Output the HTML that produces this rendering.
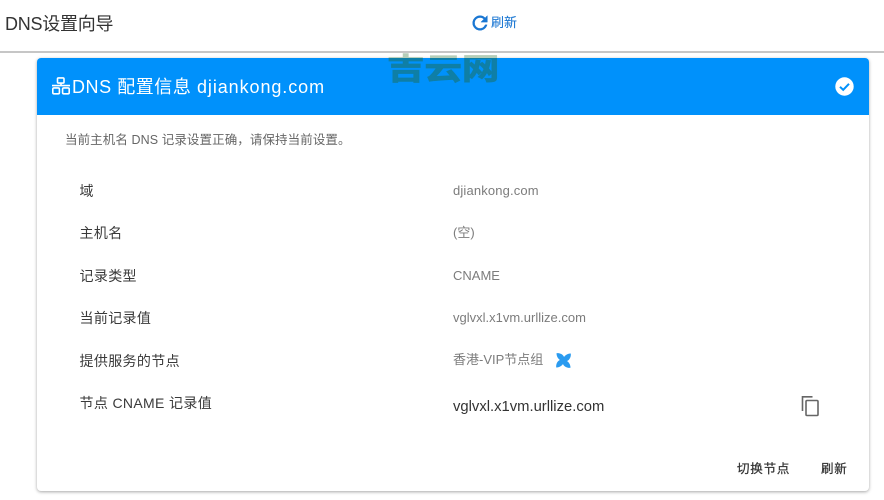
<!DOCTYPE html>
<html lang="zh">
<head>
<meta charset="utf-8">
<style>
html,body{margin:0;padding:0;background:#fff;}
body{width:884px;height:500px;overflow:hidden;position:relative;font-family:"Liberation Sans","Noto Sans CJK SC",sans-serif;}
.t{position:absolute;white-space:nowrap;line-height:20px;}
.k{left:79.500px;font-size:14px;color:#3a3a3a;letter-spacing:.35px;}
.v{left:453px;font-size:13px;color:#7c7c7c;}
.wmw{position:absolute;left:0;width:884px;overflow:hidden;}
.wm{position:absolute;left:386.500px;width:105px;height:44px;line-height:44px;font-size:35px;font-weight:bold;white-space:nowrap;transform:scale(1.07,.86);transform-origin:0 50%;-webkit-text-stroke:1px currentColor;}
.btn{font-size:12.500px;color:#333;letter-spacing:.8px;-webkit-text-stroke:.25px #333;}
</style>
</head>
<body>
<div class="t" style="left:5px;top:13.500px;font-size:18px;color:#333;letter-spacing:-.25px;">DNS设置向导</div>
<svg style="position:absolute;left:469px;top:12px" width="22" height="22" viewBox="0 0 24 24"><path fill="#1976d2" stroke="#1976d2" stroke-width=".5" d="M17.650 6.350A7.960 7.960 0 0 0 12 4a8 8 0 1 0 7.730 10h-2.080A6 6 0 1 1 12 6c1.660 0 3.140.69 4.220 1.780L13 11h7V4z"/></svg>
<div class="t" style="left:491px;top:13px;font-size:13px;color:#1976d2;-webkit-text-stroke:.1px #1976d2;">刷新</div>
<div style="position:absolute;left:0;top:51px;width:884px;height:2px;background:#c6c6c6;"></div>

<div style="position:absolute;left:37px;top:58px;width:832px;height:433px;background:#fff;border-radius:4px;box-shadow:0 1px 3px rgba(0,0,0,.35);overflow:hidden;">
  <div style="height:57px;background:#0091fb;"></div>
</div>

<svg style="position:absolute;left:51px;top:77px" width="20" height="20" viewBox="0 0 20 20" fill="none" stroke="#fff" stroke-width="1.600"><rect x="6.500" y=".9" width="6.500" height="5.200" rx="1"/><rect x="1.800" y="10.900" width="6.600" height="5.900" rx="1.200"/><rect x="11.600" y="10.900" width="6.600" height="5.900" rx="1.200"/><path d="M1 8.600H19M10 6v2.600"/></svg>
<div class="t" style="left:72px;top:77px;font-size:18px;color:#fff;letter-spacing:.55px;">DNS 配置信息 <span style="letter-spacing:.92px">djiankong.com</span></div>
<svg style="position:absolute;left:835px;top:77px" width="19" height="19" viewBox="0 0 19 19"><circle cx="9.500" cy="9.500" r="9.200" fill="#fff"/><path d="M5 9.800l3.200 3 5.800-6" fill="none" stroke="#0091fb" stroke-width="2"/></svg>

<div class="wmw" style="top:53px;height:5px;"><div class="wm" style="top:-5px;color:#b5cdb8;">吉云网</div></div>
<div class="wmw" style="top:58px;height:30px;"><div class="wm" style="top:-10px;color:#0f7fa6;">吉云网</div></div>

<div class="t" style="left:65px;top:129.500px;font-size:12.500px;color:#666;letter-spacing:.09px;">当前主机名 DNS 记录设置正确，请保持当前设置。</div>

<div class="t k" style="top:181px;">域</div>
<div class="t k" style="top:223px;">主机名</div>
<div class="t k" style="top:266px;">记录类型</div>
<div class="t k" style="top:308px;">当前记录值</div>
<div class="t k" style="top:351px;">提供服务的节点</div>
<div class="t k" style="top:393px;">节点 CNAME 记录值</div>

<div class="t v" style="top:181px;letter-spacing:.15px;">djiankong.com</div>
<div class="t v" style="top:223px;">(空)</div>
<div class="t v" style="top:266px;">CNAME</div>
<div class="t v" style="top:308px;">vglvxl.x1vm.urllize.com</div>
<div class="t v" style="top:350px;">香港-VIP节点组</div>
<svg style="position:absolute;left:555px;top:352px" width="17" height="17" viewBox="0 0 17 17" fill="#2a9bf0"><path d="M9 9.500C5 9 1.500 6 1.500 1.200C6 .6 11 4 9 9.500z"/><path d="M9 9.500C5 9 1.500 6 1.500 1.200C6 .6 11 4 9 9.500z" transform="rotate(90 8.500 8.500)"/><path d="M9 9.500C5 9 1.500 6 1.500 1.200C6 .6 11 4 9 9.500z" transform="rotate(180 8.500 8.500)"/><path d="M9 9.500C5 9 1.500 6 1.500 1.200C6 .6 11 4 9 9.500z" transform="rotate(270 8.500 8.500)"/></svg>
<div class="t" style="left:453px;top:396.500px;font-size:14.800px;color:#333;">vglvxl.x1vm.urllize.com</div>
<svg style="position:absolute;left:799px;top:395px" width="22" height="24" viewBox="0 0 22 24" fill="none" stroke="#666" stroke-width="1.600"><rect x="7" y="5.500" width="12" height="15" rx="1"/><path d="M13.500 1.800H3.500V16"/></svg>

<div class="t btn" style="left:737px;top:458.500px;">切换节点</div>
<div class="t btn" style="left:821px;top:458.500px;">刷新</div>
</body>
</html>
